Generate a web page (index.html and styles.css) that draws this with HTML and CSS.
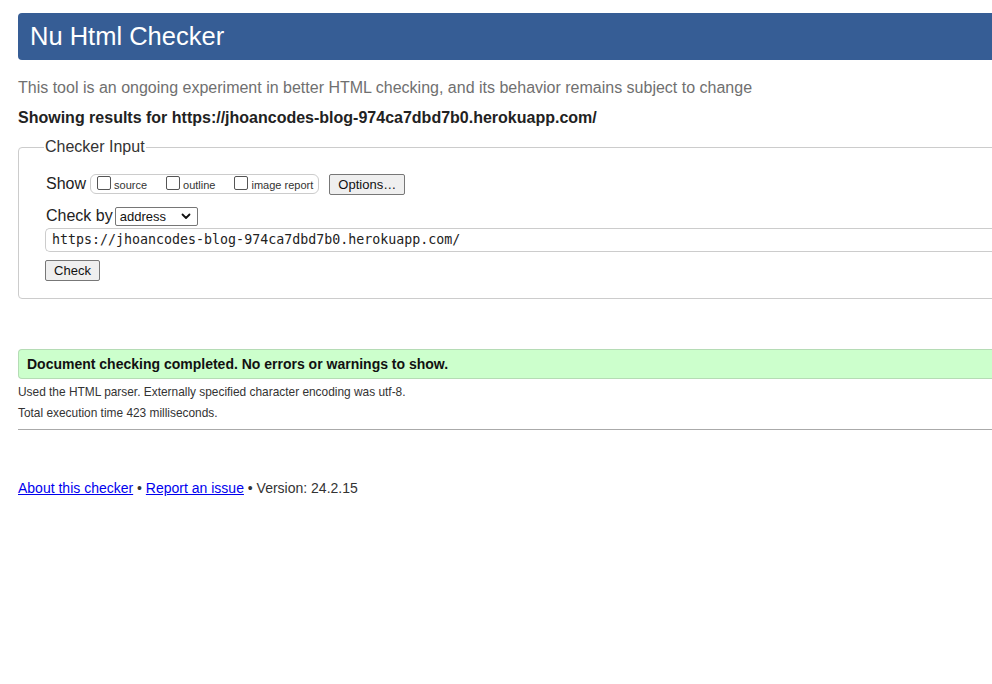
FILE: index.html
```html
<!DOCTYPE html>
<html>
<head>
<meta charset="utf-8">
<title>Nu Html Checker</title>
<link rel="stylesheet" href="styles.css">
</head>
<body>
<div class="page">
  <h1 class="banner">Nu Html Checker</h1>
  <p class="intro">This tool is an ongoing experiment in better HTML checking, and its behavior remains subject to change</p>
  <p class="showing">Showing results for https://jhoancodes-blog-974ca7dbd7b0.herokuapp.com/</p>
  <fieldset class="input-box">
    <legend class="legend">Checker Input</legend>
    <div class="row show-row">
      <span class="label">Show</span>
      <span class="opts">
        <label class="opt"><span class="cb"></span>source</label>
        <label class="opt"><span class="cb"></span>outline</label>
        <label class="opt"><span class="cb"></span>image report</label>
      </span>
      <span class="btn options">Options…</span>
    </div>
    <div class="row by-row">
      <span class="label">Check by</span>
      <span class="select">address<svg class="chev" width="10" height="7" viewBox="0 0 10 7"><path d="M1.5 1.5 L5 5 L8.5 1.5" fill="none" stroke="#111" stroke-width="1.8" stroke-linecap="round" stroke-linejoin="round"/></svg></span>
    </div>
    <div class="url">https://jhoancodes-blog-974ca7dbd7b0.herokuapp.com/</div>
    <span class="btn check">Check</span>
  </fieldset>
  <div class="success">Document checking completed. No errors or warnings to show.</div>
  <p class="details">Used the HTML parser. Externally specified character encoding was utf-8.</p>
  <p class="details">Total execution time 423 milliseconds.</p>
  <hr class="rule">
  <p class="footer"><a href="#">About this checker</a> • <a href="#">Report an issue</a> • Version: 24.2.15</p>
</div>
</body>
</html>
```
FILE: styles.css
```css
html, body {
  margin: 0;
  padding: 0;
  overflow: hidden;
  background: #fff;
}
body {
  font-family: "Liberation Sans", Arial, sans-serif;
  color: #222;
}
.page {
  width: 1100px;
  padding: 13px 0 0 18px;
}
.banner {
  margin: 0;
  height: 47px;
  line-height: 47px;
  padding-left: 12px;
  background: #365d95;
  color: #fff;
  font-weight: normal;
  font-size: 25.5px;
  border-radius: 4px 0 0 4px;
}
.intro {
  margin: 18px 0 0;
  font-size: 16px;
  line-height: 20px;
  color: #707070;
}
.showing {
  margin: 10px 0 0;
  font-size: 16px;
  line-height: 20px;
  font-weight: bold;
  color: #222;
}
.input-box {
  margin: 10px 0 0;
  padding: 17px 0 15px 27px;
  border: 1px solid #ccc;
  border-radius: 4px 0 0 4px;
  height: 127px;
  box-sizing: content-box;
}
.legend {
  padding: 0 1px;
  margin-left: -2px;
  font-size: 16px;
  color: #333;
}
.row {
  display: flex;
  align-items: center;
}
.label {
  font-size: 16px;
  color: #222;
}
.show-row {
  height: 22px;
}
.opts {
  display: flex;
  align-items: center;
  margin-left: 4px;
  height: 18px;
  border: 1px solid #ccc;
  border-radius: 6px;
  padding: 0 5px 0 6px;
  gap: 19px;
}
.opt {
  display: flex;
  align-items: center;
  font-size: 11px;
  color: #333;
  padding-top: 1px;
}
.cb {
  display: inline-block;
  width: 12px;
  height: 12px;
  border: 1px solid #555;
  border-radius: 2px;
  margin-right: 3px;
  margin-top: -3px;
}
.btn {
  display: inline-flex;
  align-items: center;
  justify-content: center;
  box-sizing: border-box;
  border: 1px solid #777;
  border-radius: 2px;
  background: #efefef;
  font-size: 13px;
  color: #111;
}
.options {
  margin-left: 10px;
  width: 76px;
  height: 21px;
}
.by-row {
  margin-top: 11px;
  height: 20px;
}
.select {
  display: inline-flex;
  align-items: center;
  justify-content: space-between;
  box-sizing: border-box;
  margin-left: 2px;
  width: 83px;
  height: 19px;
  border: 1px solid #767676;
  border-radius: 2px;
  padding: 0 6px 0 4px;
  font-size: 13px;
  color: #111;
}
.url {
  margin-top: 2px;
  height: 24px;
  box-sizing: border-box;
  border: 1px solid #ccc;
  border-right: none;
  border-radius: 5px 0 0 5px;
  padding: 0 0 0 6px;
  font-family: "DejaVu Sans Mono", monospace;
  font-size: 13.3px;
  line-height: 22px;
  color: #222;
  margin-left: -1px;
}
.check {
  margin-top: 8px;
  margin-left: -1px;
  width: 55px;
  height: 21px;
}
.success {
  margin-top: 50px;
  height: 30px;
  box-sizing: border-box;
  background: #ccffcc;
  border: 1px solid #b5dcb5;
  border-right: none;
  border-radius: 4px 0 0 4px;
  padding-left: 8px;
  font-size: 14px;
  font-weight: bold;
  line-height: 28px;
  color: #111;
}
.details {
  margin: 6px 0 0;
  font-size: 11.9px;
  line-height: 15px;
  color: #333;
}
.details + .details {
  margin-top: 6px;
}
.rule {
  margin: 8px 0 0;
  border: none;
  border-top: 1px solid #aaa;
  height: 0;
}
.footer {
  margin: 50px 0 0;
  font-size: 14px;
  line-height: 17px;
  color: #333;
}
.footer a {
  color: #0000ee;
}
```
